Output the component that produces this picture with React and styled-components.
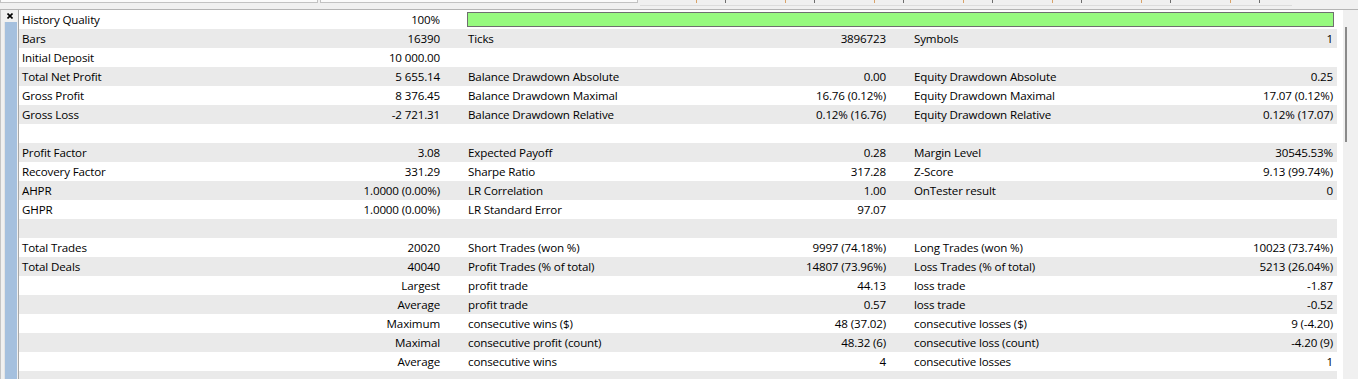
import styled, { createGlobalStyle } from 'styled-components';

const GlobalStyle = createGlobalStyle`
    html, body {
        margin: 0;
        padding: 0;
        background: #f0f0f0;
    }
    body {
        font-family: "Open Sans", "Noto Sans", sans-serif;
        font-size: 11.6px;
        letter-spacing: -0.15px;
        color: #000;
    }
`

const Window = styled.div`
    width: 1358px;
    height: 379px;
    display: flex;
    flex-direction: column;
    overflow: hidden;
    background: #f0f0f0;
`

const TopStrip = styled.div`
    height: 10px;
    display: flex;
    align-items: flex-start;
    border-bottom: 1px solid #b4b4b4;
    box-sizing: border-box;
`

const FieldStub = styled.div`
    width: ${p => p.$w}px;
    height: 3px;
    margin-right: 2px;
    background: #fafafa;
    border: 1px solid #c2c2c2;
    border-top: none;
    box-sizing: border-box;
`

const Ruler = styled.div`
    width: 652px;
    height: 6px;
    display: flex;
    border-bottom: 1px solid #dcdcdc;
    box-sizing: border-box;
`

const Tick = styled.div`
    width: 89px;
    height: 3px;
    flex-shrink: 0;
    display: flex;
    justify-content: space-between;
    padding-left: 56px;
    padding-right: 3px;
    box-sizing: border-box;

    &::before {
        content: '';
        width: 1px;
        height: 3px;
        background: #d9a36a;
    }
    &::after {
        content: '';
        width: 1px;
        height: 3px;
        background: #6e6e6e;
    }
`

const Body = styled.div`
    flex: 1;
    display: flex;
    min-height: 0;
`

const SideBar = styled.div`
    width: 18px;
    display: flex;
    flex-direction: column;
    align-items: flex-start;
    border-left: 1px solid #c4c4c4;
    box-sizing: border-box;
`

const CloseButton = styled.div`
    width: 16px;
    height: 12px;
    display: flex;
    align-items: center;
    justify-content: center;
    margin-left: 1px;
`

const CaptionStrip = styled.div`
    flex: 1;
    width: 12px;
    margin-left: 3px;
    background: #a5c0de;
    border-left: 1px solid #e4e4e4;
`

const Panel = styled.div`
    flex: 1;
    background: #fff;
    border-left: 1px solid #a8a8a8;
    padding-right: 6px;
    overflow: hidden;
`

const Row = styled.div`
    height: 19px;
    display: grid;
    grid-template-columns: 446px 446px 1fr;
    background: ${p => (p.$alt ? '#eaeaea' : '#fff')};
    line-height: 19px;
`

const Cell = styled.div`
    display: flex;
    justify-content: space-between;
    padding: 0 ${p => (p.$last ? 4 : 25)}px 0 3px;
    white-space: nowrap;
`

const Label = styled.span``

const Value = styled.span`
    text-align: right;
`

const QualityBar = styled.div`
    grid-column: 2 / span 2;
    margin: 2px 3px 2px 2px;
    background: #97fa7f;
    border: 1px solid #6f6f6f;
`

const ScrollBar = styled.div`
    width: 15px;
    background: #f0f0f0;
    display: flex;
    flex-direction: column;
`

const Thumb = styled.div`
    width: 2px;
    height: 115px;
    margin: 17px 0 0 2px;
    background: #8a8a8a;
`

const rows = [
    null,
    [['Bars', '16390'], ['Ticks', '3896723'], ['Symbols', '1']],
    [['Initial Deposit', '10 000.00'], ['', ''], ['', '']],
    [['Total Net Profit', '5 655.14'], ['Balance Drawdown Absolute', '0.00'], ['Equity Drawdown Absolute', '0.25']],
    [['Gross Profit', '8 376.45'], ['Balance Drawdown Maximal', '16.76 (0.12%)'], ['Equity Drawdown Maximal', '17.07 (0.12%)']],
    [['Gross Loss', '-2 721.31'], ['Balance Drawdown Relative', '0.12% (16.76)'], ['Equity Drawdown Relative', '0.12% (17.07)']],
    [],
    [['Profit Factor', '3.08'], ['Expected Payoff', '0.28'], ['Margin Level', '30545.53%']],
    [['Recovery Factor', '331.29'], ['Sharpe Ratio', '317.28'], ['Z-Score', '9.13 (99.74%)']],
    [['AHPR', '1.0000 (0.00%)'], ['LR Correlation', '1.00'], ['OnTester result', '0']],
    [['GHPR', '1.0000 (0.00%)'], ['LR Standard Error', '97.07'], ['', '']],
    [],
    [['Total Trades', '20020'], ['Short Trades (won %)', '9997 (74.18%)'], ['Long Trades (won %)', '10023 (73.74%)']],
    [['Total Deals', '40040'], ['Profit Trades (% of total)', '14807 (73.96%)'], ['Loss Trades (% of total)', '5213 (26.04%)']],
    [['', 'Largest'], ['profit trade', '44.13'], ['loss trade', '-1.87']],
    [['', 'Average'], ['profit trade', '0.57'], ['loss trade', '-0.52']],
    [['', 'Maximum'], ['consecutive wins ($)', '48 (37.02)'], ['consecutive losses ($)', '9 (-4.20)']],
    [['', 'Maximal'], ['consecutive profit (count)', '48.32 (6)'], ['consecutive loss (count)', '-4.20 (9)']],
    [['', 'Average'], ['consecutive wins', '4'], ['consecutive losses', '1']],
    [],
]

const CloseIcon = () => (
    <svg width="6" height="6" viewBox="0 0 6 6">
        <path d="M0.5 0.5 L5.5 5.5 M5.5 0.5 L0.5 5.5" stroke="#000" strokeWidth="1.6" />
    </svg>
)

const StatCells = ({ cells }) => (
    <>
        {[0, 1, 2].map(i => {
            const [label, value] = cells[i] || ['', '']
            return (
                <Cell key={i} $last={i === 2}>
                    <Label>{label}</Label>
                    <Value>{value}</Value>
                </Cell>
            )
        })}
    </>
)

export default function App() {
    return (
        <Window>
            <GlobalStyle />
            <TopStrip>
                <FieldStub $w={318} />
                <FieldStub $w={318} />
                <Ruler>
                    {Array.from({ length: 7 }).map((_, i) => <Tick key={i} />)}
                </Ruler>
            </TopStrip>
            <Body>
                <SideBar>
                    <CloseButton><CloseIcon /></CloseButton>
                    <CaptionStrip />
                </SideBar>
                <Panel>
                    {rows.map((cells, i) => (
                        <Row key={i} $alt={i % 2 === 1}>
                            {cells === null ? (
                                <>
                                    <Cell>
                                        <Label>History Quality</Label>
                                        <Value>100%</Value>
                                    </Cell>
                                    <QualityBar />
                                </>
                            ) : (
                                <StatCells cells={cells} />
                            )}
                        </Row>
                    ))}
                </Panel>
                <ScrollBar>
                    <Thumb />
                </ScrollBar>
            </Body>
        </Window>
    )
}
